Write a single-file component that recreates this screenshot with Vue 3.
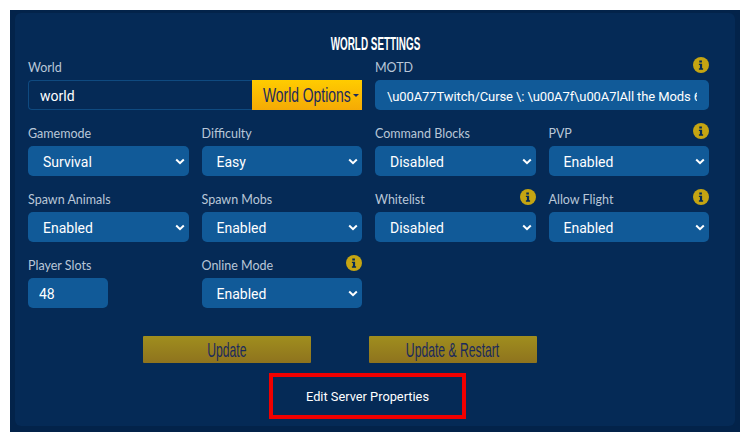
<template>
  <div class="outer">
    <div class="panel">
      <h2 class="title"><span class="squeeze">WORLD SETTINGS</span></h2>
      <div class="grid">
        <div class="field wide">
          <div class="label"><span>World</span></div>
          <div class="world-group">
            <input class="world-input" value="world" />
            <button class="world-btn"><span class="squeeze">World Options</span><i class="caret"></i></button>
          </div>
        </div>
        <div class="field wide">
          <div class="label">
            <span>MOTD</span>
            <svg class="info" viewBox="0 0 16 16"><circle cx="8" cy="8" r="8" fill="#c5a512" /><path d="M6.300 3.400h2.600v2H6.300zM5.900 6.700h3.200v4.600h1v1.400H5.900v-1.400h1V8.100h-1z" fill="#052a56" /></svg>
          </div>
          <input class="control motd" :value="motd" />
        </div>
        <div v-for="f in fields" :key="f.name" class="field">
          <div class="label">
            <span>{{ f.name }}</span>
            <svg v-if="f.info" class="info" viewBox="0 0 16 16"><circle cx="8" cy="8" r="8" fill="#c5a512" /><path d="M6.300 3.400h2.600v2H6.300zM5.900 6.700h3.200v4.600h1v1.400H5.900v-1.400h1V8.100h-1z" fill="#052a56" /></svg>
          </div>
          <input v-if="f.input" class="control slots" :value="f.value" />
          <div v-else class="select-wrap">
            <select class="control select">
              <option>{{ f.value }}</option>
            </select>
            <svg class="chev" viewBox="0 0 10 7"><path d="M1.200 1.500 5 5.200l3.800-3.700" fill="none" stroke="#fff" stroke-width="2" /></svg>
          </div>
        </div>
      </div>
      <div class="actions">
        <button class="gold"><span class="squeeze">Update</span></button>
        <button class="gold"><span class="squeeze">Update &amp; Restart</span></button>
      </div>
      <div class="edit-row">
        <a class="edit">Edit Server Properties</a>
      </div>
    </div>
  </div>
</template>

<script setup>
const motd = '\\u00A77Twitch/Curse \\: \\u00A7f\\u00A7lAll the Mods 6'
const fields = [
  { name: 'Gamemode', value: 'Survival' },
  { name: 'Difficulty', value: 'Easy' },
  { name: 'Command Blocks', value: 'Disabled' },
  { name: 'PVP', value: 'Enabled', info: true },
  { name: 'Spawn Animals', value: 'Enabled' },
  { name: 'Spawn Mobs', value: 'Enabled' },
  { name: 'Whitelist', value: 'Disabled', info: true },
  { name: 'Allow Flight', value: 'Enabled', info: true },
  { name: 'Player Slots', value: '48', input: true },
  { name: 'Online Mode', value: 'Enabled', info: true }
]
</script>

<style>
html, body {
  margin: 0;
  background: #fff;
}
</style>

<style scoped>
.outer {
  box-sizing: border-box;
  width: 730px;
  height: 422px;
  margin: 10px 10px 0;
  padding: 3px 5px 6px;
  background: #03234a;
  font-family: Roboto, "Liberation Sans", sans-serif;
}
.panel {
  box-sizing: border-box;
  height: 100%;
  padding: 23px 26px 0 13px;
  background: #052a56;
  border-radius: 6px;
}
.title {
  margin: 0 0 7px;
  padding-left: 14px;
  height: 17px;
  line-height: 17px;
  text-align: center;
  color: #fff;
  font-family: "Liberation Sans", sans-serif;
  font-size: 18px;
  font-weight: 700;
  white-space: nowrap;
}
.squeeze {
  display: inline-block;
  transform: scaleX(0.54);
  white-space: nowrap;
}
.title .squeeze {
  transform: scaleX(0.55);
}
.grid {
  display: grid;
  grid-template-columns: repeat(4, 160.500px);
  column-gap: 13px;
  row-gap: 16px;
}
.wide {
  grid-column: span 2;
}
.label {
  box-sizing: border-box;
  display: flex;
  justify-content: space-between;
  align-items: center;
  height: 14px;
  padding-top: 1px;
  margin-bottom: 6px;
  color: #b9c7d8;
  font-family: Lato, Roboto, sans-serif;
  font-size: 12.500px;
  line-height: 13px;
}
.info {
  width: 16px;
  height: 16px;
  margin-top: -6px;
}
.world-group {
  display: flex;
  height: 30px;
}
.world-input {
  box-sizing: border-box;
  flex: 1;
  min-width: 0;
  height: 30px;
  padding: 2px 11px 0;
  border: 1px solid #0f4a80;
  border-right: none;
  border-radius: 4px 0 0 4px;
  background: #052a56;
  color: #fff;
  font: 400 14px Roboto, sans-serif;
  outline: none;
}
.world-btn {
  display: flex;
  align-items: center;
  flex: none;
  width: 110px;
  height: 30px;
  padding: 0 0 0 11px;
  border: none;
  background: linear-gradient(#ffcc00, #f5aa05);
  color: #1b2a5c;
  font-family: "Liberation Sans", sans-serif;
  font-size: 21px;
}
.world-btn .squeeze {
  width: 87px;
  transform-origin: left center;
  transform: scaleX(0.66);
}
.caret {
  flex: none;
  margin-left: 3px;
  border-top: 3px solid #1b2a5c;
  border-left: 3px solid transparent;
  border-right: 3px solid transparent;
}
.control {
  box-sizing: border-box;
  width: 100%;
  height: 30px;
  padding: 2px 11px 0;
  border: none;
  border-radius: 5px;
  background: #115a98;
  color: #fff;
  font: 400 14px Roboto, sans-serif;
  outline: none;
}
.motd {
  padding-left: 12px;
  padding-right: 12px;
  font-size: 13px;
  letter-spacing: -0.100px;
}
.slots {
  width: 80px;
}
.select-wrap {
  position: relative;
  height: 30px;
}
.select {
  appearance: none;
  padding-left: 15px;
  opacity: 1;
}
.chev {
  position: absolute;
  right: 4px;
  top: 12px;
  width: 10px;
  height: 7px;
  pointer-events: none;
}
.actions {
  display: flex;
  gap: 58px;
  margin: 28px 0 0 115px;
}
.gold {
  width: 168px;
  height: 27px;
  padding: 0;
  border: none;
  border-radius: 1px;
  background: linear-gradient(#a08e1e, #8e731e);
  color: #1b2a5c;
  font-family: "Liberation Sans", sans-serif;
  font-size: 21px;
}
.gold .squeeze {
  transform: scaleX(0.58);
}
.edit-row {
  display: flex;
  margin: 10px 0 0 241px;
}
.edit {
  box-sizing: border-box;
  width: 197px;
  height: 46px;
  display: flex;
  align-items: center;
  justify-content: center;
  border: 4px solid #f00000;
  color: #fff;
  font-size: 12.800px;
}
</style>
